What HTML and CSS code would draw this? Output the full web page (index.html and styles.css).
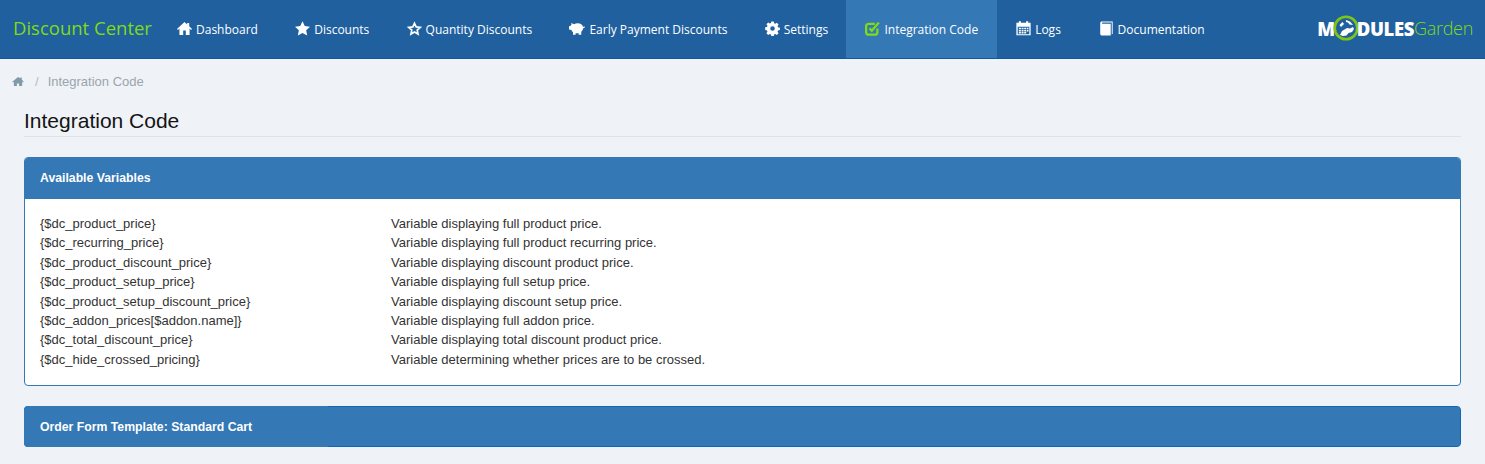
FILE: index.html
```html
<!DOCTYPE html>
<html lang="en">
<head>
<meta charset="utf-8">
<title>Integration Code</title>
<link rel="stylesheet" href="styles.css">
</head>
<body>
<header class="topbar">
  <a class="brand">Discount Center</a>
  <nav class="nav">
    <a class="nav-item"><svg class="ic" viewBox="0 0 16 16"><path d="M8 1 0 8.400l1 1.100L2.600 8.100V15h4v-4.800h2.800V15h4V8.100L15 9.500l1-1.100-3-2.800V2h-2.200v1.600z"/></svg><span>Dashboard</span></a>
    <a class="nav-item"><svg class="ic" viewBox="0 0 16 16"><path d="M8 .3l2.400 5.100 5.600.7-4.100 3.800 1.100 5.600L8 12.800l-5 2.700 1.100-5.600L0 6.100l5.600-.7z"/></svg><span>Discounts</span></a>
    <a class="nav-item"><svg class="ic" viewBox="0 0 16 16"><path class="outline" d="M8 2.400l1.800 3.900 4.300.5-3.200 2.900.9 4.200L8 11.800l-3.800 2.100.9-4.200-3.200-2.900 4.300-.5z"/></svg><span>Quantity Discounts</span></a>
    <a class="nav-item"><svg class="ic ic-wide" viewBox="0 0 18 16"><path d="M2.500 1.800l3.200 1.400C6.900 2.500 8.200 2 9.800 2c3.200 0 5.600 1.800 6 4.400l1.400-.9.800 1-2.200 1.500c-.1 1.500-.9 2.800-2 3.600V15h-2.900v-1.700c-1.100.2-2.400.2-3.500 0V15H4.500v-2.900C3.700 11.400 3.100 10.500 2.700 9.600L0 9V5.500l1.600-.3c.3-.5.700-1 1.200-1.400z"/></svg><span>Early Payment Discounts</span></a>
    <a class="nav-item"><svg class="ic" viewBox="0 0 16 16"><path fill-rule="evenodd" d="M6.600 0h2.800l.4 2.100 1.300.6 1.800-1.200 2 2-1.200 1.800.6 1.300 2.100.4v2.800l-2.100.4-.6 1.300 1.200 1.800-2 2-1.800-1.200-1.300.6-.4 2.100H6.600l-.4-2.100-1.300-.6-1.800 1.200-2-2 1.200-1.800-.6-1.300L-.4 9.400V6.600l2.100-.4.6-1.300-1.200-1.800 2-2 1.800 1.200 1.300-.6zM8 5.400a2.600 2.600 0 1 0 0 5.200 2.600 2.600 0 0 0 0-5.200z" transform="translate(.5 .5) scale(.94)"/></svg><span>Settings</span></a>
    <a class="nav-item is-active"><svg class="ic" viewBox="0 0 16 16"><path class="edit-box" d="M10.500 3H4C2.500 3 1.200 4.200 1.200 5.700v6.200c0 1.500 1.300 2.700 2.800 2.700h6.500c1.500 0 2.700-1.200 2.700-2.700V8"/><path class="edit-check" d="M4.800 7.800l2.400 2.600L14.800 1.500"/></svg><span>Integration Code</span></a>
    <a class="nav-item"><svg class="ic" viewBox="0 0 16 16"><path fill-rule="evenodd" d="M3 .3h2.200v1.500h5.600V.3H13v1.500h2.600v13.500H.4V1.800H3zM1.800 6.200v7.800h12.400V6.200z"/><path d="M3 7.200h2.200v1.600H3zM6 7.200h2v1.600H6zM8.800 7.200h2v1.600h-2zM11.500 7.200h1.800v1.600h-1.800zM3 9.500h2.200v1.600H3zM6 9.500h2v1.600H6zM8.800 9.500h2v1.600h-2zM11.500 9.500h1.800v1.600h-1.800zM3 11.800h2.200v1.500H3zM6 11.800h2v1.500H6zM8.800 11.800h2v1.500h-2z"/></svg><span>Logs</span></a>
    <a class="nav-item nav-doc"><svg class="ic" viewBox="0 0 16 16"><path d="M3 .5h11.600v13l-1 1V1.600H3.800c-.9 0-.9 1.300 0 1.300h8.700v12.600H3.400C2.100 15.500 1.300 14.700 1.300 13.500V2.300C1.300 1.200 2 .5 3 .5z"/></svg><span>Documentation</span></a>
  </nav>
  <div class="logo">
    <span class="logo-bold">M</span>
    <svg class="logo-ring" viewBox="0 0 26 26"><circle class="ring-fill" cx="13" cy="13" r="11"/><path class="ring-land" d="M6.500 10l3-3 1.500 2-3 3zM13 5l4 1.500 3 3.500-3.500-.5-1.500-2-2-.5zM7 20l2-4 5-3 3 .5 3-1.500 1 2-2 3-3.500 1-2 2.500-3.500.5z"/><circle class="ring-line" cx="13" cy="13" r="11.300"/></svg>
    <span class="logo-bold">DULES</span><span class="logo-thin">Garden</span>
  </div>
</header>

<main class="page">
  <ol class="crumbs">
    <li><svg class="crumb-home" viewBox="0 0 16 14"><path d="M8 1 .4 7.400l.8 1L2.500 7.300V13h4V9.500h3V13h4V7.300l1.300 1.100.8-1L13 4.400V1.500h-2v1.200z"/></svg></li>
    <li class="crumb-sep">/</li>
    <li class="crumb-current">Integration Code</li>
  </ol>

  <div class="content">
    <h1 class="title">Integration Code</h1>

    <section class="panel">
      <h2 class="panel-head">Available Variables</h2>
      <div class="panel-body">
        <div class="vars">
          <span>{$dc_product_price}</span><span>Variable displaying full product price.</span>
          <span>{$dc_recurring_price}</span><span>Variable displaying full product recurring price.</span>
          <span>{$dc_product_discount_price}</span><span>Variable displaying discount product price.</span>
          <span>{$dc_product_setup_price}</span><span>Variable displaying full setup price.</span>
          <span>{$dc_product_setup_discount_price}</span><span>Variable displaying discount setup price.</span>
          <span>{$dc_addon_prices[$addon.name]}</span><span>Variable displaying full addon price.</span>
          <span>{$dc_total_discount_price}</span><span>Variable displaying total discount product price.</span>
          <span>{$dc_hide_crossed_pricing}</span><span>Variable determining whether prices are to be crossed.</span>
        </div>
      </div>
    </section>

    <section class="panel panel-closed">
      <h2 class="panel-head">Order Form Template: Standard Cart</h2>
    </section>
  </div>
</main>
</body>
</html>
```

FILE: styles.css
```css
* { box-sizing: border-box; }
html, body { margin: 0; padding: 0; }
body {
  background: #eff2f7;
  font-family: "Liberation Sans", Arial, sans-serif;
  color: #333;
  height: 464px;
  overflow: hidden;
}

/* top bar */
.topbar {
  display: flex;
  align-items: stretch;
  height: 59px;
  background: #20609f;
  border-bottom: 1px solid #0f5a9e;
  font-family: "Open Sans", sans-serif;
}
.brand {
  width: 158px;
  padding-left: 13px;
  line-height: 56px;
  font-size: 18.500px;
  font-weight: 500;
  color: #7fdb14;
  white-space: nowrap;
}
.nav { display: flex; align-items: stretch; flex: 1; }
.nav-item {
  display: flex;
  align-items: center;
  gap: 4px;
  padding: 0 18.250px 0 19px;
  color: #fff;
  font-size: 12px;
  white-space: nowrap;
}
.nav-item.is-active { background: #3478b5; padding-right: 19px; }
.nav-doc { gap: 4px; padding-left: 19.500px; }
.ic { width: 15px; height: 15px; fill: #fff; flex: none; margin-top: -2px; }
.ic-wide { width: 16px; }
.outline { fill: none; stroke: #fff; stroke-width: 1.800; }
.edit-box { fill: none; stroke: #7fdb14; stroke-width: 2.400; }
.edit-check { fill: none; stroke: #7fdb14; stroke-width: 2.400; }

/* logo */
.logo {
  display: flex;
  align-items: center;
  margin-right: 12px;
  margin-top: -2px;
  white-space: nowrap;
}
.logo-bold {
  font-weight: 800;
  font-size: 18.500px;
  color: #fff;
  letter-spacing: -.4px;
}
.logo-thin {
  font-weight: 300;
  font-size: 18px;
  color: #7fdb14;
  letter-spacing: -.3px;
}
.logo-ring { width: 26px; height: 26px; margin: 0 -2px; flex: none; }
.ring-fill { fill: #20609f; }
.ring-land { fill: #fff; }
.ring-line { fill: none; stroke: #7fc614; stroke-width: 2.600; }

/* breadcrumb */
.crumbs {
  display: flex;
  align-items: center;
  list-style: none;
  margin: 0;
  padding: 13px 0 0 12px;
  height: 31px;
  font-size: 13px;
  color: #9aa6ab;
}
.crumb-home { width: 12px; height: 11px; fill: #7f9ba8; display: block; }
.crumb-sep { margin: 0 9px 0 11px; color: #b3bcc1; }

/* content */
.content { padding: 0 24px; }
.title {
  margin: 18px 0 20px;
  padding-bottom: 2px;
  border-bottom: 1px solid #dfe2e6;
  font-size: 21px;
  line-height: 26px;
  font-weight: 400;
  color: #141414;
}
.panel {
  position: relative;
  background: #fff;
  border: 1px solid #3478b5;
  border-radius: 4px;
  overflow: hidden;
  margin-bottom: 20px;
}
.panel-head {
  margin: 0;
  background: #3478b5;
  color: #fff;
  font-size: 12.250px;
  font-weight: 700;
  line-height: 41px;
  height: 41px;
  padding: 0 15px;
}
.panel-body { padding: 15px; height: 186px; }
.vars {
  display: grid;
  grid-template-columns: 351px 1fr;
  grid-auto-rows: 19.400px;
  font-size: 13px;
  line-height: 19.400px;
  color: #333;
}
.panel-closed {
  background: #3478b5;
  border-color: #0f68b7;
  height: 41px;
  overflow: visible;
}
.panel-closed .panel-head { height: 39px; line-height: 40px; border-radius: 3px; }
.panel-closed::before {
  content: "";
  position: absolute;
  left: -1px;
  top: -1px;
  bottom: -1px;
  width: 303px;
  border: 1px solid #3478b5;
  border-right: 0;
  border-radius: 4px 0 0 4px;
}
```
